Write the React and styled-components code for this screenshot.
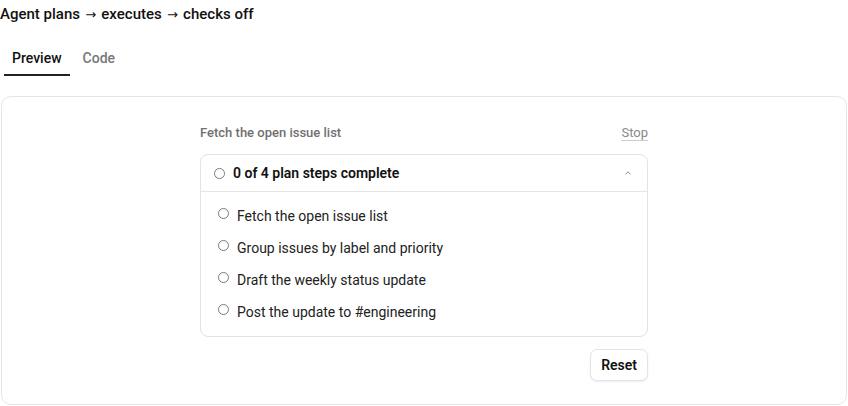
import React, { useState } from "react";
import styled, { createGlobalStyle } from "styled-components";

const GlobalStyle = createGlobalStyle`
  html, body {
    margin: 0;
    padding: 0;
    background: #ffffff;
    font-family: "Segoe UI", Roboto, "Liberation Sans", sans-serif;
    color: #111111;
  }
`;

const Page = styled.div`
  display: flex;
  flex-direction: column;
  width: 848px;
  height: 406px;
  box-sizing: border-box;
`;

const Title = styled.h1`
  margin: 0;
  padding: 4px 0 0 0;
  height: 20px;
  font-size: 15px;
  font-weight: 500;
  line-height: 20px;
  color: #111;
`;

const Arrow = styled.span`
  font-family: "DejaVu Sans", sans-serif;
  font-size: 13px;
  font-weight: 400;
  line-height: 0;
  margin: 0 1.5px;
`;

const Tabs = styled.div`
  display: flex;
  margin-top: 19px;
  padding-left: 4px;
`;

const Tab = styled.button`
  border: none;
  background: none;
  padding: 6px 8px 6px;
  line-height: 19px;
  font-family: inherit;
  font-size: 14px;
  font-weight: 500;
  color: ${(p) => (p.$active ? "#111" : "#777")};
  border-bottom: 2px solid ${(p) => (p.$active ? "#222" : "transparent")};
  margin-right: 5px;
  cursor: pointer;
`;

const Card = styled.div`
  margin: 20px 1px 1px 1px;
  flex: 1;
  border: 1px solid #e6e6e6;
  border-radius: 10px;
  display: flex;
  justify-content: center;
  padding-top: 25px;
`;

const Column = styled.div`
  width: 448px;
  display: flex;
  flex-direction: column;
`;

const TopRow = styled.div`
  display: flex;
  justify-content: space-between;
  align-items: center;
  height: 20px;
`;

const Current = styled.span`
  font-size: 13px;
  font-weight: 500;
  color: #707070;
`;

const StopLink = styled.button`
  border: none;
  background: none;
  padding: 0;
  font-family: inherit;
  font-size: 13px;
  color: #888;
  text-decoration: underline;
  text-decoration-color: #ccc;
  text-underline-offset: 3px;
  cursor: pointer;
`;

const Plan = styled.div`
  margin-top: 12px;
  border: 1px solid #e3e3e3;
  border-radius: 8px;
`;

const PlanHeader = styled.div`
  display: flex;
  align-items: center;
  height: 36px;
  padding: 0 14px 0 13px;
  border-bottom: 1px solid #e6e6e6;
  gap: 8px;
`;

const HeaderText = styled.span`
  flex: 1;
  font-size: 14px;
  font-weight: 600;
  color: #111;
`;

const Steps = styled.ul`
  list-style: none;
  margin: 0;
  padding: 8px 0 8px 17px;
  display: flex;
  flex-direction: column;
`;

const Step = styled.li`
  display: flex;
  align-items: flex-start;
  gap: 8px;
  height: 32px;
  line-height: 32px;
  font-size: 14px;
  color: #222;
`;

const Dot = styled.span`
  flex: none;
  width: 9px;
  height: 9px;
  border: 1px solid #7a7a7a;
  border-radius: 50%;
  margin-top: ${(p) => p.$top || 0}px;
`;

const Footer = styled.div`
  display: flex;
  justify-content: flex-end;
  margin-top: 12px;
`;

const ResetButton = styled.button`
  font-family: inherit;
  font-size: 14px;
  font-weight: 600;
  color: #111;
  background: #fff;
  border: 1px solid #e4e4e4;
  border-radius: 7px;
  height: 32px;
  padding: 0 10px;
  box-shadow: 0 1px 2px rgba(0, 0, 0, 0.08);
  cursor: pointer;
`;

const Chevron = () => (
  <svg width="10" height="10" viewBox="0 0 10 10" fill="none">
    <path d="M2.5 6.2 L5 3.8 L7.5 6.2" stroke="#888" strokeWidth="1" />
  </svg>
);

const steps = [
  "Fetch the open issue list",
  "Group issues by label and priority",
  "Draft the weekly status update",
  "Post the update to #engineering",
];

export default function App() {
  const [tab, setTab] = useState("preview");
  return (
    <Page>
      <GlobalStyle />
      <Title>
        Agent plans <Arrow>→</Arrow> executes <Arrow>→</Arrow> checks off
      </Title>
      <Tabs>
        <Tab $active={tab === "preview"} onClick={() => setTab("preview")}>
          Preview
        </Tab>
        <Tab $active={tab === "code"} onClick={() => setTab("code")}>
          Code
        </Tab>
      </Tabs>
      <Card>
        <Column>
          <TopRow>
            <Current>Fetch the open issue list</Current>
            <StopLink>Stop</StopLink>
          </TopRow>
          <Plan>
            <PlanHeader>
              <Dot />
              <HeaderText>0 of {steps.length} plan steps complete</HeaderText>
              <Chevron />
            </PlanHeader>
            <Steps>
              {steps.map((s) => (
                <Step key={s}>
                  <Dot $top={8} />
                  {s}
                </Step>
              ))}
            </Steps>
          </Plan>
          <Footer>
            <ResetButton>Reset</ResetButton>
          </Footer>
        </Column>
      </Card>
    </Page>
  );
}
